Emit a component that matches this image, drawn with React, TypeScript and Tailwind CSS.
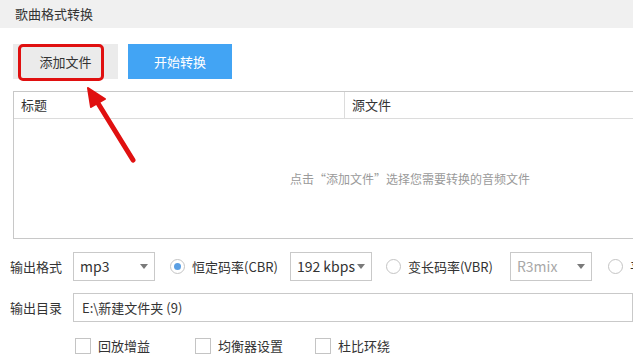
import React from 'react';

const font = { fontFamily: '"Microsoft YaHei", "Noto Sans CJK SC", "Liberation Sans", sans-serif' };

const Caret = () => (
  <svg width="8" height="5" viewBox="0 0 8 5" className="shrink-0">
    <path d="M0 0 L8 0 L4 5 Z" fill="#7a7a7a" />
  </svg>
);

interface SelectProps {
  value: string;
  muted?: boolean;
}

const Select = ({ value, muted }: SelectProps) => (
  <div className="flex h-[29px] w-[82px] shrink-0 items-center justify-between border border-[#c9c9c9] bg-white pr-[6px] pl-[6px]">
    <span className={`whitespace-nowrap text-[14px] ${muted ? 'text-[#a8a8a8]' : 'text-[#333]'}`}>{value}</span>
    <Caret />
  </div>
);

const Radio = ({ checked }: { checked?: boolean }) => (
  <span className="flex h-[15px] w-[15px] shrink-0 items-center justify-center rounded-full border border-[#c4c4c4] bg-white">
    {checked && <span className="h-[7px] w-[7px] rounded-full bg-[#5b9fe3]" />}
  </span>
);

const Check = ({ label }: { label: string }) => (
  <div className="flex w-[120px] shrink-0 items-center gap-[7px]">
    <span className="h-[16px] w-[16px] shrink-0 border border-[#c4c4c4] bg-white" />
    <span className="whitespace-nowrap text-[13px] text-[#333]">{label}</span>
  </div>
);

export default function App() {
  return (
    <div className="relative h-[356px] w-[633px] overflow-hidden bg-white text-[#333]" style={font}>
      <div className="flex h-[28px] items-center bg-[#f0f0f0] pl-[15px] text-[13px] text-[#333]">
        歌曲格式转换
      </div>

      <div className="mt-[16px] flex pl-[13px]">
        <div className="relative flex h-[35px] w-[105px] items-center justify-center bg-[#ebebeb] text-[13px] text-[#333]">
          添加文件
          <span className="absolute top-0 left-[5px] h-[37px] w-[86px] rounded-[5px] border-[3px] border-[#e01010]" />
        </div>
        <div className="ml-[10px] flex h-[35px] w-[104px] items-center justify-center bg-[#42a4f4] text-[13px] text-white">
          开始转换
        </div>
      </div>

      <div className="mt-[12px] ml-[13px] flex h-[148px] w-[660px] flex-col border border-[#c8c8c8]">
        <div className="flex h-[27px] shrink-0 items-center border-b border-[#dcdcdc] text-[13px]">
          <div className="flex h-full w-[331px] items-center border-r border-[#dcdcdc] pl-[7px]">标题</div>
          <div className="pl-[7px]">源文件</div>
        </div>
        <div className="flex flex-1 items-center whitespace-nowrap pl-[276px] text-[12px] text-[#9a9a9a]">
          点击“添加文件”选择您需要转换的音频文件
        </div>
      </div>

      <div className="mt-[13px] flex h-[29px] items-center whitespace-nowrap text-[13px]">
        <span className="w-[73px] shrink-0 pl-[10px]">输出格式</span>
        <Select value="mp3" />
        <div className="ml-[15px] flex shrink-0 items-center gap-[7px]">
          <Radio checked />
          <span>恒定码率(CBR)</span>
        </div>
        <div className="ml-[12px] shrink-0">
          <Select value="192 kbps" />
        </div>
        <div className="ml-[14px] flex shrink-0 items-center gap-[7px]">
          <Radio />
          <span>变长码率(VBR)</span>
        </div>
        <div className="ml-[17px] shrink-0">
          <Select value="R3mix" muted />
        </div>
        <div className="ml-[16px] flex shrink-0 items-center gap-[7px]">
          <Radio />
          <span>平均码率(ABR)</span>
        </div>
      </div>

      <div className="mt-[12px] flex h-[29px] items-center whitespace-nowrap text-[13px]">
        <span className="w-[73px] shrink-0 pl-[10px]">输出目录</span>
        <div className="flex h-[29px] w-[560px] shrink-0 items-center border border-[#c9c9c9] pl-[8px] text-[13px]">
          E:\新建文件夹 (9)
        </div>
      </div>

      <div className="mt-[16px] flex h-[16px] items-center pl-[75px]">
        <Check label="回放增益" />
        <Check label="均衡器设置" />
        <Check label="杜比环绕" />
      </div>

      <svg className="absolute top-[80px] left-[78px]" width="70" height="90" viewBox="0 0 70 90">
        <line x1="55" y1="80" x2="18" y2="20" stroke="#e01010" strokeWidth="5" strokeLinecap="round" />
        <path d="M10 8 L27 19 L13 27 Z" fill="#e01010" stroke="#e01010" strokeWidth="2" strokeLinejoin="round" />
      </svg>
    </div>
  );
}
